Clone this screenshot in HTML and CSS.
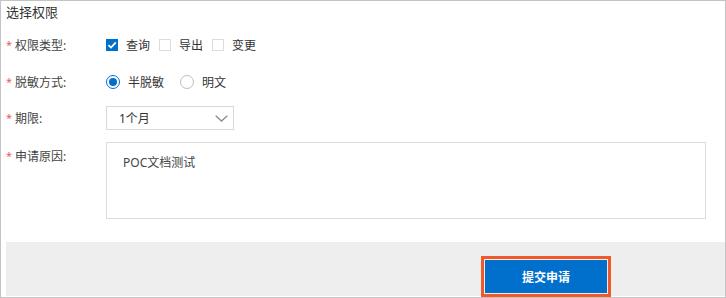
FILE: index.html
```html
<!DOCTYPE html>
<html lang="zh-CN">
<head>
<meta charset="utf-8">
<title>选择权限</title>
<link rel="stylesheet" href="styles.css">
</head>
<body>
<div class="panel">
  <div class="title">选择权限</div>
  <div class="row row-type">
    <div class="label"><span class="req">*</span>权限类型:</div>
    <div class="controls">
      <span class="check checked"><svg viewBox="0 0 12 12" width="12" height="12"><path d="M2.4 6.2 L5 8.6 L9.8 3.4" fill="none" stroke="#fff" stroke-width="1.8"/></svg></span><span class="opt">查询</span>
      <span class="check"></span><span class="opt">导出</span>
      <span class="check"></span><span class="opt">变更</span>
    </div>
  </div>
  <div class="row row-mask">
    <div class="label"><span class="req">*</span>脱敏方式:</div>
    <div class="controls">
      <span class="radio on"></span><span class="opt">半脱敏</span>
      <span class="radio"></span><span class="opt">明文</span>
    </div>
  </div>
  <div class="row row-period">
    <div class="label"><span class="req">*</span>期限:</div>
    <div class="select">
      <span>1个月</span>
      <svg class="chev" viewBox="0 0 13 7" width="13" height="7"><path d="M0.7 0.7 L6.5 6 L12.3 0.7" fill="none" stroke="#8c8c8c" stroke-width="1.3"/></svg>
    </div>
  </div>
  <div class="row row-reason">
    <div class="label"><span class="req">*</span>申请原因:</div>
    <div class="textarea">POC文档测试</div>
  </div>
  <div class="footer">
    <div class="highlight"><div class="btn">提交申请</div></div>
  </div>
</div>
</body>
</html>
```
FILE: styles.css
```css
* { box-sizing: border-box; }
html, body { margin: 0; padding: 0; background: #fff; }
body {
  font-family: "Noto Sans", "Noto Sans CJK SC", sans-serif;
  font-size: 12px;
  color: #333;
}
.panel {
  width: 726px;
  height: 298px;
  border: 1px solid #c4c4c4;
  display: flex;
  flex-direction: column;
}
.title {
  height: 22px;
  line-height: 22px;
  padding-left: 5px;
  font-size: 13px;
  color: #333;
}
.row {
  display: flex;
  align-items: center;
  padding-left: 5px;
}
.row-type { margin-top: 10px; height: 24px; }
.row-mask { margin-top: 13px; height: 24px; }
.row-period { margin-top: 12px; height: 24px; }
.row-reason { margin-top: 12px; align-items: flex-start; }
.label {
  width: 100px;
  color: #444;
  white-space: nowrap;
}
.row-reason .label { margin-top: 5px; }
.req {
  color: #e8605c;
  display: inline-block;
  width: 9px;
  font-size: 11px;
  vertical-align: 1px;
}
.controls {
  display: flex;
  align-items: center;
}
.check {
  width: 12px;
  height: 12px;
  border: 1px solid #dcdcdc;
  background: #fff;
  display: inline-block;
  margin-right: 8px;
}
.check.checked {
  background: #0070cc;
  border-color: #0070cc;
  display: inline-flex;
  align-items: center;
  justify-content: center;
}
.check.checked svg { flex: none; margin: -1px; }
.opt { margin-right: 9px; color: #333; }
.radio {
  width: 14px;
  height: 14px;
  border-radius: 50%;
  border: 1px solid #bdbdbd;
  display: inline-block;
  margin-right: 8px;
  position: relative;
}
.radio.on { border-color: #0070cc; }
.radio.on::after {
  content: "";
  position: absolute;
  left: 2px; top: 2px;
  width: 8px; height: 8px;
  border-radius: 50%;
  background: #0070cc;
}
.row-mask .opt:nth-of-type(2) { margin-right: 16px; }
.select {
  width: 128px;
  height: 24px;
  border: 1px solid #d9d9d9;
  display: flex;
  align-items: center;
  justify-content: space-between;
  padding: 0 5px 0 12px;
  color: #333;
}
.textarea {
  width: 600px;
  height: 77px;
  border: 1px solid #dcdcdc;
  padding: 10px 16px;
  color: #444;
}
.footer {
  margin-top: 23px;
  margin-left: 5px;
  height: 54px;
  background: #eeeeee;
  padding-top: 14px;
  padding-left: 475px;
}
.highlight {
  width: 130px;
  height: 41px;
  border: 3px solid #ee5a2c;
  padding: 1px;
  background: #f7e6df;
}
.btn {
  width: 122px;
  height: 33px;
  background: #0070cc;
  color: #fff;
  font-weight: bold;
  display: flex;
  align-items: center;
  justify-content: center;
  font-size: 12px;
}
```
